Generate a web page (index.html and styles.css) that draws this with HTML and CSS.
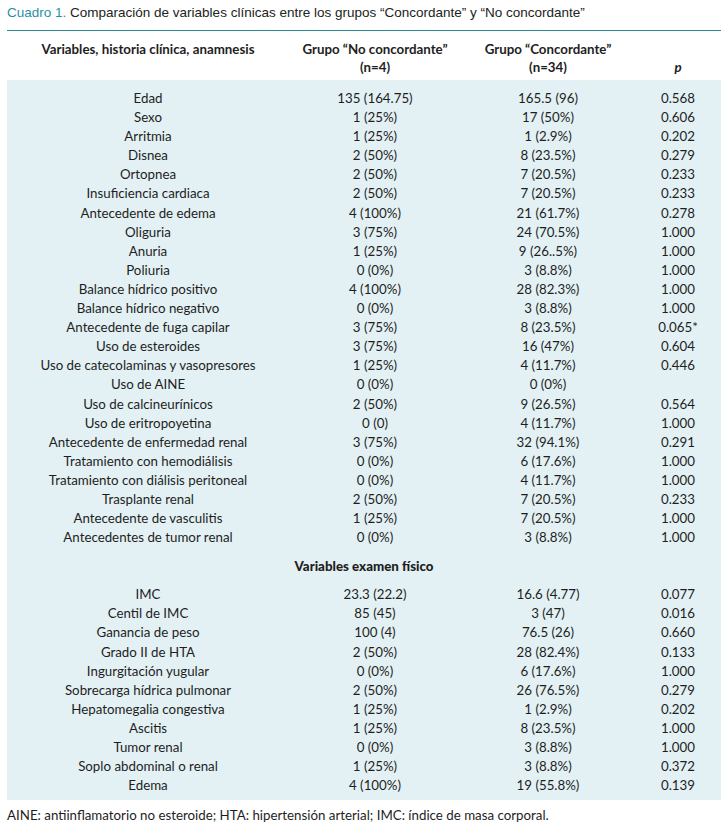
FILE: index.html
```html
<!DOCTYPE html>
<html lang="es">
<head>
<meta charset="utf-8">
<link rel="stylesheet" href="styles.css">
</head>
<body>
<div class="page">
  <p class="title"><span class="label">Cuadro 1.</span> Comparación de variables clínicas entre los grupos “Concordante” y “No concordante”</p>
  <table class="tbl">
    <colgroup>
      <col class="c1"><col class="c2"><col class="c3"><col class="c4">
    </colgroup>
    <thead>
      <tr>
        <th>Variables, historia clínica, anamnesis<br>&nbsp;</th>
        <th>Grupo “No concordante”<br>(n=4)</th>
        <th>Grupo “Concordante”<br>(n=34)</th>
        <th class="pcol">&nbsp;<br><i>p</i></th>
      </tr>
    </thead>
    <tbody>
      <tr class="first"><td>Edad</td><td>135 (164.75)</td><td>165.5 (96)</td><td>0.568</td></tr>
      <tr><td>Sexo</td><td>1 (25%)</td><td>17 (50%)</td><td>0.606</td></tr>
      <tr><td>Arritmia</td><td>1 (25%)</td><td>1 (2.9%)</td><td>0.202</td></tr>
      <tr><td>Disnea</td><td>2 (50%)</td><td>8 (23.5%)</td><td>0.279</td></tr>
      <tr><td>Ortopnea</td><td>2 (50%)</td><td>7 (20.5%)</td><td>0.233</td></tr>
      <tr><td>Insuficiencia cardiaca</td><td>2 (50%)</td><td>7 (20.5%)</td><td>0.233</td></tr>
      <tr><td>Antecedente de edema</td><td>4 (100%)</td><td>21 (61.7%)</td><td>0.278</td></tr>
      <tr><td>Oliguria</td><td>3 (75%)</td><td>24 (70.5%)</td><td>1.000</td></tr>
      <tr><td>Anuria</td><td>1 (25%)</td><td>9 (26..5%)</td><td>1.000</td></tr>
      <tr><td>Poliuria</td><td>0 (0%)</td><td>3 (8.8%)</td><td>1.000</td></tr>
      <tr><td>Balance hídrico positivo</td><td>4 (100%)</td><td>28 (82.3%)</td><td>1.000</td></tr>
      <tr><td>Balance hídrico negativo</td><td>0 (0%)</td><td>3 (8.8%)</td><td>1.000</td></tr>
      <tr><td>Antecedente de fuga capilar</td><td>3 (75%)</td><td>8 (23.5%)</td><td>0.065*</td></tr>
      <tr><td>Uso de esteroides</td><td>3 (75%)</td><td>16 (47%)</td><td>0.604</td></tr>
      <tr><td>Uso de catecolaminas y vasopresores</td><td>1 (25%)</td><td>4 (11.7%)</td><td>0.446</td></tr>
      <tr><td>Uso de AINE</td><td>0 (0%)</td><td>0 (0%)</td><td></td></tr>
      <tr><td>Uso de calcineurínicos</td><td>2 (50%)</td><td>9 (26.5%)</td><td>0.564</td></tr>
      <tr><td>Uso de eritropoyetina</td><td>0 (0)</td><td>4 (11.7%)</td><td>1.000</td></tr>
      <tr><td>Antecedente de enfermedad renal</td><td>3 (75%)</td><td>32 (94.1%)</td><td>0.291</td></tr>
      <tr><td>Tratamiento con hemodiálisis</td><td>0 (0%)</td><td>6 (17.6%)</td><td>1.000</td></tr>
      <tr><td>Tratamiento con diálisis peritoneal</td><td>0 (0%)</td><td>4 (11.7%)</td><td>1.000</td></tr>
      <tr><td>Trasplante renal</td><td>2 (50%)</td><td>7 (20.5%)</td><td>0.233</td></tr>
      <tr><td>Antecedente de vasculitis</td><td>1 (25%)</td><td>7 (20.5%)</td><td>1.000</td></tr>
      <tr><td>Antecedentes de tumor renal</td><td>0 (0%)</td><td>3 (8.8%)</td><td>1.000</td></tr>
      <tr class="section"><td colspan="4"><b>Variables examen físico</b></td></tr>
      <tr><td>IMC</td><td>23.3 (22.2)</td><td>16.6 (4.77)</td><td>0.077</td></tr>
      <tr><td>Centil de IMC</td><td>85 (45)</td><td>3 (47)</td><td>0.016</td></tr>
      <tr><td>Ganancia de peso</td><td>100 (4)</td><td>76.5 (26)</td><td>0.660</td></tr>
      <tr><td>Grado II de HTA</td><td>2 (50%)</td><td>28 (82.4%)</td><td>0.133</td></tr>
      <tr><td>Ingurgitación yugular</td><td>0 (0%)</td><td>6 (17.6%)</td><td>1.000</td></tr>
      <tr><td>Sobrecarga hídrica pulmonar</td><td>2 (50%)</td><td>26 (76.5%)</td><td>0.279</td></tr>
      <tr><td>Hepatomegalia congestiva</td><td>1 (25%)</td><td>1 (2.9%)</td><td>0.202</td></tr>
      <tr><td>Ascitis</td><td>1 (25%)</td><td>8 (23.5%)</td><td>1.000</td></tr>
      <tr><td>Tumor renal</td><td>0 (0%)</td><td>3 (8.8%)</td><td>1.000</td></tr>
      <tr><td>Soplo abdominal o renal</td><td>1 (25%)</td><td>3 (8.8%)</td><td>0.372</td></tr>
      <tr class="last"><td>Edema</td><td>4 (100%)</td><td>19 (55.8%)</td><td>0.139</td></tr>
    </tbody>
  </table>
  <p class="note">AINE: antiinflamatorio no esteroide; HTA: hipertensión arterial; IMC: índice de masa corporal.</p>
</div>
</body>
</html>
```

FILE: styles.css
```css
html, body {
  margin: 0;
  padding: 0;
  background: #ffffff;
}
.page {
  padding: 0 7px;
  width: 714px;
  color: #1e1e1e;
  font-family: Lato, "Open Sans", sans-serif;
}
.title {
  margin: 0;
  padding-top: 5px;
  height: 31px;
  box-sizing: border-box;
  font-family: "Liberation Sans", Arial, sans-serif;
  font-size: 13.5px;
  line-height: 16px;
  color: #222;
  border-bottom: 1.5px solid #2d8791;
}
.label {
  color: #1f93a3;
}
.tbl {
  width: 714px;
  border-collapse: collapse;
  table-layout: fixed;
  font-size: 13.3px;
}
.c1 { width: 282px; }
.c2 { width: 172px; }
.c3 { width: 174px; }
.c4 { width: 86px; }
.tbl th {
  font-weight: bold;
  font-size: 13.3px;
  line-height: 18px;
  text-align: center;
  padding: 9px 0 4px;
  vertical-align: top;
}
.tbl tbody {
  background: #e3f1f4;
}
.tbl td {
  text-align: center;
  line-height: 19.1px;
  padding: 0;
  white-space: nowrap;
}
.tbl tr.first td {
  padding-top: 9px;
}
.tbl tr.last td {
  padding-bottom: 5px;
}
.tbl tr.section td {
  line-height: 38px;
  font-weight: bold;
}
.note {
  margin: 7px 0 0;
  font-size: 13.3px;
  line-height: 16px;
}
```
